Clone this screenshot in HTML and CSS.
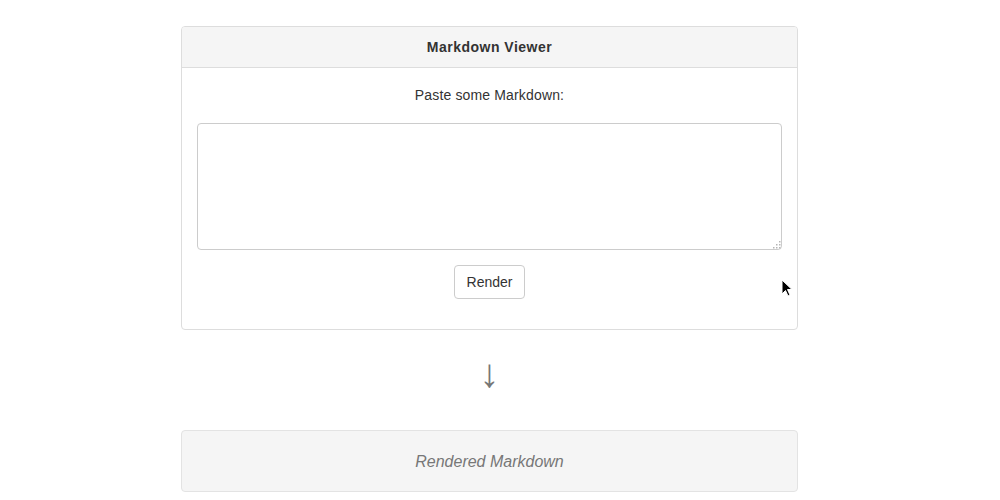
FILE: index.html
```html
<!DOCTYPE html>
<html>
<head>
<meta charset="utf-8">
<link rel="stylesheet" href="styles.css">
</head>
<body>
<div class="wrap">
  <div class="card">
    <div class="card-head">Markdown Viewer</div>
    <div class="card-body">
      <label class="prompt">Paste some Markdown:</label>
      <div class="field">
        <textarea class="input"></textarea>
        <svg class="grip" width="9" height="9" viewBox="0 0 9 9"><g fill="#b5b5b5"><rect x="7" y="1" width="1.5" height="1.5"/><rect x="4" y="4" width="1.5" height="1.5"/><rect x="7" y="4" width="1.5" height="1.5"/><rect x="1" y="7" width="1.5" height="1.5"/><rect x="4" y="7" width="1.5" height="1.5"/><rect x="7" y="7" width="1.5" height="1.5"/></g></svg>
      </div>
      <button class="btn">Render</button>
    </div>
  </div>
  <div class="arrow">↓</div>
  <div class="output">Rendered Markdown</div>
</div>
<svg class="cursor" width="12" height="19" viewBox="0 0 12 19"><path d="M1 1 L1 15 L4.5 11.5 L7 17 L9 16 L6.5 10.5 L11 10.5 Z" fill="#000" stroke="#fff" stroke-width="1"/></svg>
</body>
</html>
```
FILE: styles.css
```css
html, body { margin: 0; padding: 0; background: #fff; }
body {
  font-family: "Liberation Sans", Arial, sans-serif;
  color: #333;
  padding: 26px 21px 0 0;
}
.wrap { width: 617px; margin: 0 auto; }
.card {
  border: 1px solid #ddd;
  border-radius: 4px;
  background: #fff;
}
.card-head {
  background: #f5f5f5;
  border-bottom: 1px solid #ddd;
  border-radius: 3px 3px 0 0;
  height: 40px;
  line-height: 40px;
  text-align: center;
  font-weight: bold;
  font-size: 14px;
  letter-spacing: 0.5px;
}
.card-body {
  padding: 17px 15px 30px;
  display: flex;
  flex-direction: column;
  align-items: center;
}
.prompt { font-size: 14px; line-height: 20px; letter-spacing: 0.15px; }
.field { position: relative; margin-top: 18px; width: 100%; height: 127px; }
.input {
  display: block;
  width: 100%;
  height: 127px;
  box-sizing: border-box;
  border: 1px solid #ccc;
  border-radius: 4px;
  font-family: inherit;
  resize: none;
  margin: 0;
}
.grip { position: absolute; right: 1px; bottom: 1px; }
.btn {
  margin-top: 15px;
  height: 34px;
  padding: 0 12px;
  background: #fff;
  border: 1px solid #ccc;
  border-radius: 4px;
  font-family: inherit;
  font-size: 14px;
  color: #333;
}
.arrow {
  text-align: center;
  font-size: 40px;
  color: #777;
  line-height: 46px;
  margin: 20px 0 34px;
}
.output {
  background: #f5f5f5;
  border: 1px solid #e3e3e3;
  border-radius: 4px;
  height: 60px;
  line-height: 62px;
  text-align: center;
  font-style: italic;
  font-size: 16px;
  color: #777;
}
.cursor { position: absolute; left: 781px; top: 279px; }
```
